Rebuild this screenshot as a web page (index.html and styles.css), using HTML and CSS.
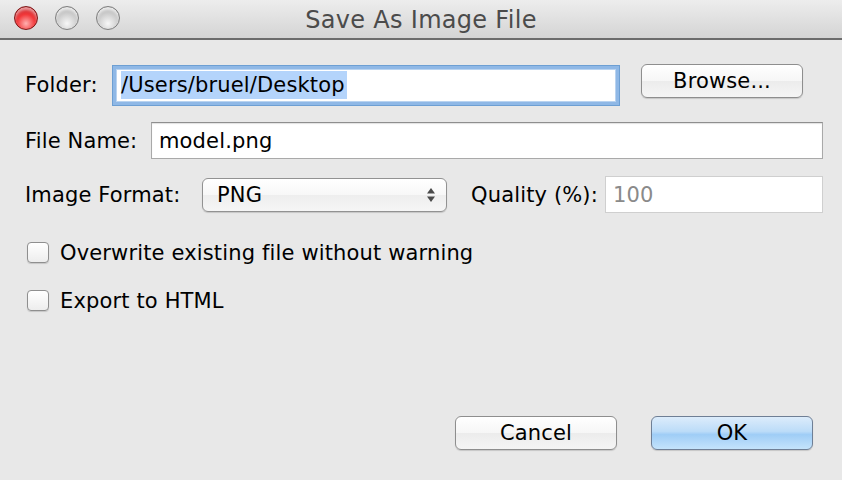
FILE: index.html
```html
<!DOCTYPE html>
<html>
<head>
<meta charset="utf-8">
<title>Save As Image File</title>
<link rel="stylesheet" href="styles.css">
</head>
<body>
<div class="window">
  <div class="titlebar">
    <div class="lights">
      <span class="light red"></span>
      <span class="light gray"></span>
      <span class="light gray"></span>
    </div>
    <div class="title">Save As Image File</div>
  </div>
  <div class="content">
    <div class="row row-folder">
      <label class="lbl lbl-folder">Folder:</label>
      <div class="field focus"><span class="sel">/Users/bruel/Desktop</span></div>
      <button class="btn btn-browse">Browse...</button>
    </div>
    <div class="row row-name">
      <label class="lbl lbl-name">File Name:</label>
      <div class="field plain grow">model.png</div>
    </div>
    <div class="row row-format">
      <label class="lbl lbl-format">Image Format:</label>
      <div class="select">
        <span class="select-text">PNG</span>
        <svg class="arrows" width="10" height="16" viewBox="0 0 10 16">
          <path d="M5 1 L9 6.5 L1 6.5 Z" fill="#4a4a4a"/>
          <path d="M5 15 L9 9.5 L1 9.5 Z" fill="#4a4a4a"/>
        </svg>
      </div>
      <label class="lbl lbl-quality">Quality (%):</label>
      <div class="field plain grow disabled">100</div>
    </div>
    <div class="row row-check first">
      <span class="checkbox"></span>
      <span class="check-label">Overwrite existing file without warning</span>
    </div>
    <div class="row row-check second">
      <span class="checkbox"></span>
      <span class="check-label">Export to HTML</span>
    </div>
    <div class="spacer"></div>
    <div class="buttons">
      <button class="btn btn-cancel">Cancel</button>
      <button class="btn btn-ok">OK</button>
    </div>
  </div>
</div>
</body>
</html>
```

FILE: styles.css
```css
html, body {
  margin: 0;
  padding: 0;
  background: #e8e8e8;
}
body {
  font-family: "DejaVu Sans", "Liberation Sans", sans-serif;
  font-size: 21px;
  letter-spacing: 0.15px;
  color: #000;
}
.window {
  width: 842px;
  height: 480px;
  display: flex;
  flex-direction: column;
  background: #e8e8e8;
  overflow: hidden;
}
.titlebar {
  height: 38px;
  flex: none;
  position: relative;
  background: linear-gradient(#ededed, #d4d4d4);
  border-bottom: 2px solid #6c6c6c;
  display: flex;
  align-items: center;
  justify-content: center;
}
.lights {
  position: absolute;
  left: 14px;
  top: 6px;
  display: flex;
  gap: 17px;
}
.light {
  width: 24px;
  height: 24px;
  border-radius: 50%;
  box-sizing: border-box;
}
.light.red {
  background: radial-gradient(circle at 50% 75%, #ffb0b0 0%, #f2393b 45%, #b0141b 100%);
  border: 1px solid #7d1818;
  box-shadow: inset 0 3px 3px rgba(255,255,255,0.55);
}
.light.gray {
  background: radial-gradient(circle at 50% 75%, #f7f7f7 0%, #cdcdcd 50%, #999999 100%);
  border: 1px solid #7f7f7f;
  box-shadow: inset 0 3px 3px rgba(255,255,255,0.75);
}
.title {
  font-size: 24px;
  letter-spacing: 0.3px;
  color: #4b4b4b;
  margin-top: 1px;
}
.content {
  flex: 1;
  display: flex;
  flex-direction: column;
  padding: 0 19px 0 25px;
}
.row {
  display: flex;
  align-items: center;
  flex: none;
}
.row-folder { margin-top: 24px; height: 42px; }
.row-name { margin-top: 16px; height: 37px; }
.row-format { margin-top: 17px; height: 37px; }
.row-check.first { margin-top: 29px; height: 21px; padding-left: 2px; }
.row-check.second { margin-top: 27px; height: 21px; padding-left: 2px; }
.lbl { flex: none; white-space: nowrap; }
.lbl-folder { width: 87px; }
.lbl-name { width: 126px; }
.lbl-format { width: 177px; }
.lbl-quality { width: 134px; margin-left: 24px; }
.field {
  box-sizing: border-box;
  background: #fff;
  display: flex;
  align-items: center;
  white-space: nowrap;
}
.field.focus {
  width: 508px;
  height: 41px;
  border: 1px solid #6d9fd3;
  box-shadow: inset 0 0 0 3px #8fb8e6, inset 0 0 0 4px #b9d3f0;
  padding-left: 8px;
}
.sel {
  background: #b4d4fb;
  line-height: 28px;
  padding-right: 2px;
}
.field.plain {
  height: 37px;
  border: 1px solid #a9a9a9;
  border-top-color: #8e8e8e;
  box-shadow: inset 0 1px 1px rgba(0,0,0,0.12);
  padding-left: 7px;
}
.grow { flex: 1; }
.field.disabled { color: #8a8a8a; border-color: #cfcfcf; box-shadow: none; }
.btn {
  font-family: inherit;
  font-size: 21px;
  letter-spacing: 0.15px;
  color: #000;
  box-sizing: border-box;
  height: 34px;
  border: 1px solid #8e8e8e;
  border-radius: 6px;
  background: linear-gradient(#ffffff, #f6f6f6 50%, #ececec 51%, #f5f5f5);
  box-shadow: 0 1px 1px rgba(0,0,0,0.15);
  padding: 0;
  flex: none;
}
.btn-browse {
  width: 162px;
  margin-left: 21px;
  align-self: flex-start;
}
.select {
  width: 245px;
  height: 34px;
  box-sizing: border-box;
  border: 1px solid #929292;
  border-radius: 6px;
  background: linear-gradient(#ffffff, #f7f7f7 50%, #eeeeee 51%, #f6f6f6);
  box-shadow: 0 1px 1px rgba(0,0,0,0.15);
  display: flex;
  align-items: center;
  justify-content: space-between;
  padding: 0 10px 0 14px;
  flex: none;
}
.checkbox {
  width: 22px;
  height: 21px;
  box-sizing: border-box;
  border: 1px solid #8f8f8f;
  border-radius: 4px;
  background: linear-gradient(#ffffff, #ededed);
  box-shadow: 0 1px 1px rgba(0,0,0,0.15);
  flex: none;
}
.check-label { margin-left: 11px; white-space: nowrap; }
.spacer { flex: 1; }
.buttons {
  display: flex;
  justify-content: flex-end;
  gap: 34px;
  margin-bottom: 30px;
  padding-right: 10px;
}
.btn-cancel, .btn-ok { width: 162px; }
.btn-ok {
  border-color: #6f7f95;
  background: linear-gradient(#dcecfb, #bcdcf8 45%, #9fcdf6 55%, #c4e3fb);
}
```
